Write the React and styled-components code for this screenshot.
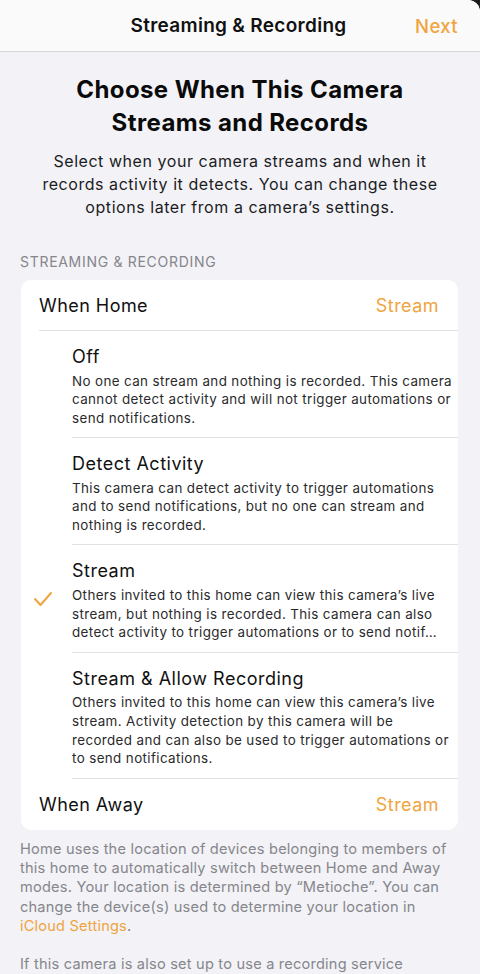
import React from 'react'
import styled, { createGlobalStyle } from 'styled-components'

const GlobalStyle = createGlobalStyle`
  body {
    margin: 0;
    background: #1c1c1e;
    font-family: Inter, "Noto Sans", sans-serif;
    -webkit-font-smoothing: antialiased;
  }
`

const ORANGE = '#f0a43e'

const options = [
  {
    title: 'Off',
    text: 'No one can stream and nothing is recorded. This camera cannot detect activity and will not trigger automations or send notifications.',
  },
  {
    title: 'Detect Activity',
    text: 'This camera can detect activity to trigger automations and to send notifications, but no one can stream and nothing is recorded.',
  },
  {
    title: 'Stream',
    text: 'Others invited to this home can view this camera\u2019s live stream, but nothing is recorded. This camera can also detect activity to trigger automations or to send notif\u2026',
    checked: true,
  },
  {
    title: 'Stream & Allow Recording',
    text: 'Others invited to this home can view this camera\u2019s live stream. Activity detection by this camera will be recorded and can also be used to trigger automations or to send notifications.',
  },
]

function Check() {
  return (
    <svg width="20" height="16" viewBox="0 0 20 16">
      <polyline points="2,8 7.5,14 18,2" fill="none" stroke={ORANGE} strokeWidth="2" strokeLinecap="round" strokeLinejoin="round" />
    </svg>
  )
}

export default function App() {
  return (
    <>
      <GlobalStyle />
      <Sheet>
        <NavBar>
          <span />
          <NavTitle>Streaming &amp; Recording</NavTitle>
          <NavAction>Next</NavAction>
        </NavBar>

        <Intro>
          <Heading>Choose When This Camera<br />Streams and Records</Heading>
          <Lead>
            Select when your camera streams and when it records activity it detects. You can change these options later from a camera&rsquo;s settings.
          </Lead>
        </Intro>

        <SectionLabel>STREAMING &amp; RECORDING</SectionLabel>

        <Card>
          <ValueRow>
            <span>When Home</span>
            <Value>Stream</Value>
          </ValueRow>
          {options.map((o) => (
            <OptionRow key={o.title}>
              <CheckCell>{o.checked && <Check />}</CheckCell>
              <OptionBody>
                <OptionTitle>{o.title}</OptionTitle>
                <OptionText>{o.text}</OptionText>
              </OptionBody>
            </OptionRow>
          ))}
          <ValueRow $last>
            <span>When Away</span>
            <Value>Stream</Value>
          </ValueRow>
        </Card>

        <Footer>
          <p>
            Home uses the location of devices belonging to members of this home to automatically switch between Home and Away modes. Your location is determined by &ldquo;Metioche&rdquo;. You can change the device(s) used to determine your location in <Link>iCloud Settings</Link>.
          </p>
          <p>If this camera is also set up to use a recording service</p>
        </Footer>
      </Sheet>
    </>
  )
}

const Sheet = styled.div`
  background: #f2f2f7;
  border-top-right-radius: 12px;
  height: 974px;
  overflow: hidden;
`

const NavBar = styled.header`
  height: 52px;
  background: #fafafa;
  border-bottom: 1px solid #d6d6da;
  display: grid;
  grid-template-columns: 80px 1fr 80px;
  align-items: center;
  box-sizing: border-box;
`

const NavTitle = styled.div`
  text-align: center;
  font-size: 19px;
  letter-spacing: 0.3px;
  font-weight: 600;
  color: #111;
  margin-right: 3px;
`

const NavAction = styled.div`
  text-align: right;
  padding-right: 22px;
  font-size: 18.5px;
  letter-spacing: 0.4px;
  font-weight: 500;
  color: ${ORANGE};
`

const Intro = styled.section`
  padding: 21px 38px 0;
  text-align: center;
`

const Heading = styled.h1`
  margin: 0 -20px;
  font-size: 24px;
  letter-spacing: 0.4px;
  line-height: 33px;
  font-weight: 700;
  color: #0a0a0a;
`

const Lead = styled.p`
  margin: 11px 0 0;
  font-size: 16px;
  letter-spacing: 0.55px;
  line-height: 23px;
  color: #1c1c1e;
`

const SectionLabel = styled.div`
  margin: 34px 0 9px;
  padding-left: 20px;
  font-size: 14px;
  letter-spacing: 0.7px;
  line-height: 18px;
  color: #86868b;
`

const Card = styled.div`
  margin: 0 22px 0 21px;
  background: #fff;
  border-radius: 10px;
  overflow: hidden;
`

const ValueRow = styled.div`
  height: ${(p) => (p.$last ? 51 : 50)}px;
  margin-left: 18px;
  padding-right: 19px;
  display: flex;
  align-items: center;
  justify-content: space-between;
  font-size: 18px;
  letter-spacing: 0.45px;
  color: #111;
  border-bottom: ${(p) => (p.$last ? 'none' : '1px solid #e2e2e6')};
`

const Value = styled.span`
  color: ${ORANGE};
`

const OptionRow = styled.div`
  display: flex;
  align-items: center;
`

const CheckCell = styled.div`
  width: 51px;
  flex: none;
  display: flex;
  justify-content: center;
  padding: 0 8px 0 0;
  box-sizing: border-box;
`

const OptionBody = styled.div`
  flex: 1;
  padding: 15px 6px 9.6px 0;
  border-bottom: 1px solid #e2e2e6;
`

const OptionTitle = styled.div`
  font-size: 18px;
  letter-spacing: 0.5px;
  line-height: 22px;
  color: #111;
`

const OptionText = styled.div`
  margin-top: 3.5px;
  font-size: 13.4px;
  letter-spacing: 0.38px;
  line-height: 18.7px;
  color: #2a2a2c;
`

const Footer = styled.div`
  padding: 10px 26px 0 20px;
  font-size: 14.6px;
  letter-spacing: 0.2px;
  line-height: 19.4px;
  color: #86868b;

  p {
    margin: 0 0 18px;
  }
`

const Link = styled.span`
  color: ${ORANGE};
`
